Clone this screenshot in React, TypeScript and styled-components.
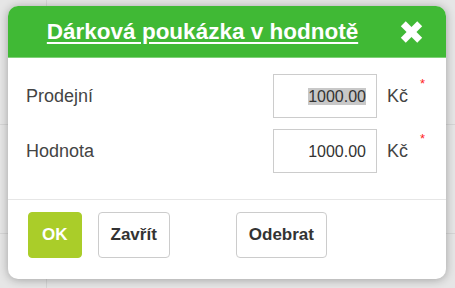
import React from "react";
import styled, { createGlobalStyle } from "styled-components";

const Global = createGlobalStyle`
  html, body {
    margin: 0;
    padding: 0;
  }
  body {
    width: 455px;
    height: 288px;
    overflow: hidden;
    background-color: #e6e6e6;
    background-image:
      linear-gradient(to right, transparent 46px, #d6d6d6 46px, #d6d6d6 47px, transparent 47px),
      linear-gradient(to bottom, transparent 124px, #d6d6d6 124px, #d6d6d6 125px, transparent 125px),
      linear-gradient(to bottom, transparent 233px, #d6d6d6 233px, #d6d6d6 234px, transparent 234px);
    font-family: "Liberation Sans", Arial, sans-serif;
  }
`;

const Stage = styled.div`
  padding: 6px 0 0 8px;
`;

const Dialog = styled.div`
  width: 438px;
  background: #ffffff;
  border-radius: 10px;
  overflow: hidden;
  box-shadow: 0 1px 10px rgba(0, 0, 0, 0.3);
`;

const Header = styled.div`
  height: 51px;
  display: flex;
  align-items: center;
  background: #40b935;
  border-bottom: 1px solid #7fd277;
`;

const Title = styled.a`
  flex: 1;
  text-align: center;
  color: #ffffff;
  font-weight: bold;
  font-size: 22.5px;
  text-decoration: underline;
  text-decoration-thickness: 2px;
  text-underline-offset: 3px;
  cursor: pointer;
`;

const CloseButton = styled.button`
  width: 25px;
  height: 24px;
  margin: 0 22px 0 2px;
  padding: 0;
  border: none;
  background: none;
  display: flex;
  align-items: center;
  justify-content: center;
  cursor: pointer;
`;

const Body = styled.div`
  padding: 16px 0 26px 18px;
  display: grid;
  grid-template-columns: 247px 104px auto auto 1fr;
  row-gap: 11px;
  align-items: center;
`;

const Label = styled.div`
  font-size: 18px;
  color: #444444;
`;

const Field = styled.div`
  box-sizing: border-box;
  width: 104px;
  height: 44px;
  border: 1px solid #cccccc;
  padding-right: 10px;
  display: flex;
  align-items: center;
  justify-content: flex-end;
  font-size: 16px;
  color: #333333;
`;

const Selected = styled.span<{ $on?: boolean }>`
  background: ${(p) => (p.$on ? "#c8c8c8" : "transparent")};
  line-height: 17px;
`;

const Unit = styled.div`
  padding-left: 10px;
  font-size: 18px;
  color: #444444;
`;

const Required = styled.div`
  align-self: start;
  margin-top: 3px;
  padding-left: 12px;
  font-size: 13px;
  line-height: 13px;
  color: #ff2222;
`;

const Footer = styled.div`
  border-top: 1px solid #e6e6e6;
  padding: 12px 0 21px 20px;
  display: flex;
  align-items: center;
`;

const Button = styled.button<{ $primary?: boolean; $spaced?: boolean }>`
  box-sizing: border-box;
  height: 46px;
  padding: 0 ${(p) => (p.$primary ? "13px" : "12px")};
  margin-left: ${(p) => (p.$spaced ? "66px" : "0")};
  margin-right: ${(p) => (p.$primary ? "16px" : "0")};
  border-radius: 4px;
  border: 1px solid ${(p) => (p.$primary ? "#aacd29" : "#cccccc")};
  background: ${(p) => (p.$primary ? "#aacd29" : "#ffffff")};
  color: ${(p) => (p.$primary ? "#ffffff" : "#333333")};
  font-family: "Liberation Sans", Arial, sans-serif;
  font-weight: bold;
  font-size: 17px;
  cursor: pointer;
`;

const CloseIcon = () => (
  <svg width="25" height="24" viewBox="0 0 24 24">
    <g stroke="#ffffff" strokeWidth="7" strokeLinecap="butt">
      <line x1="3.8" y1="3.8" x2="20.2" y2="20.2" />
      <line x1="20.2" y1="3.8" x2="3.8" y2="20.2" />
    </g>
  </svg>
);

const rows = [
  { label: "Prodejní", value: "1000.00", selected: true },
  { label: "Hodnota", value: "1000.00", selected: false },
];

export default function App() {
  return (
    <>
      <Global />
      <Stage>
        <Dialog>
          <Header>
            <Title>Dárková poukázka v hodnotě</Title>
            <CloseButton aria-label="Zavřít">
              <CloseIcon />
            </CloseButton>
          </Header>
          <Body>
            {rows.map((r) => (
              <React.Fragment key={r.label}>
                <Label>{r.label}</Label>
                <Field>
                  <Selected $on={r.selected}>{r.value}</Selected>
                </Field>
                <Unit>Kč</Unit>
                <Required>*</Required>
                <div />
              </React.Fragment>
            ))}
          </Body>
          <Footer>
            <Button $primary>OK</Button>
            <Button>Zavřít</Button>
            <Button $spaced>Odebrat</Button>
          </Footer>
        </Dialog>
      </Stage>
    </>
  );
}
